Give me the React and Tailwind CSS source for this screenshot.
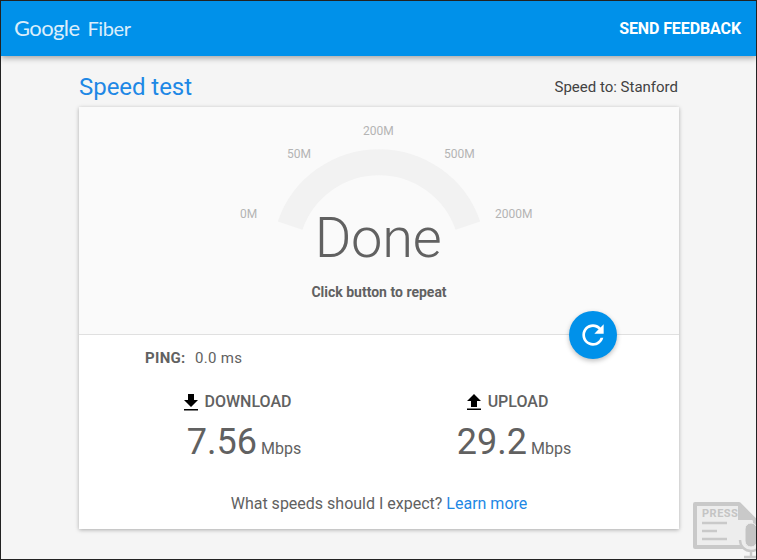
export default function App() {
  const roboto = { fontFamily: "Roboto, sans-serif" };
  return (
    <div style={roboto} className="relative w-[757px] h-[560px] overflow-hidden border border-[#222] bg-[#f5f5f5] text-[#616161]">
      <header className="relative z-10 h-[55px] bg-[#0091ea] shadow-[0_2px_6px_rgba(0,0,0,0.35)] flex items-center justify-between pl-[13px] pr-[15px] text-white">
        <div className="flex items-baseline gap-[8px] text-[22px] leading-none tracking-[-0.6px] opacity-85 font-['Lato',sans-serif] pb-[2px]">
          <span>Google</span>
          <span className="text-[20px] tracking-[-0.4px]">Fiber</span>
        </div>
        <span className="text-[16px] font-bold tracking-[-0.1px]">SEND FEEDBACK</span>
      </header>

      <main className="w-[600px] ml-[78px]">
        <div className="h-[51px] flex items-center justify-between">
          <h1 className="text-[24px] text-[#1e88e5] pt-[11px] tracking-[-0.05px]">Speed test</h1>
          <span className="text-[15px] text-[#424242] pt-[11px] pr-[1px]">Speed to: Stanford</span>
        </div>

        <section className="relative bg-white shadow-[0_1px_4px_rgba(0,0,0,0.3)] h-[422px]">
          <div className="relative h-[228px] bg-[#fafafa] border-b border-[#e0e0e0]">
            <svg className="absolute left-[190px] top-[39px]" width="220" height="100" viewBox="0 0 220 100">
              <path d="M 21.1 79.6 A 94 94 0 0 1 198.9 79.6" fill="none" stroke="#f2f2f2" strokeWidth="26" />
            </svg>
            <span className="absolute left-[161px] top-[98px] text-[12px] text-[#b4b4b4]">0M</span>
            <span className="absolute left-[208px] top-[38px] text-[12px] text-[#b4b4b4]">50M</span>
            <span className="absolute left-[284px] top-[15px] text-[12px] text-[#b4b4b4]">200M</span>
            <span className="absolute left-[365px] top-[38px] text-[12px] text-[#b4b4b4]">500M</span>
            <span className="absolute left-[416px] top-[98px] text-[12px] text-[#b4b4b4]">2000M</span>
            <div className="absolute inset-x-0 -left-[2px] top-[96px] text-center text-[56px] leading-[70px] font-light tracking-[-0.3px]">Done</div>
            <div className="absolute inset-x-0 top-[177px] text-center text-[14px] leading-[17px] font-bold">Click button to repeat</div>
            <button className="absolute left-[490px] top-[204px] w-[48px] h-[48px] rounded-full bg-[#0091ea] shadow-[0_2px_5px_rgba(0,0,0,0.26)] flex items-center justify-center">
              <svg width="32" height="32" viewBox="0 0 24 24" fill="#fff">
                <path d="M17.65 6.35C16.2 4.9 14.21 4 12 4c-4.42 0-7.99 3.58-7.99 8s3.57 8 7.99 8c3.73 0 6.84-2.55 7.73-6h-2.08c-.82 2.33-3.04 4-5.65 4-3.31 0-6-2.69-6-6s2.69-6 6-6c1.66 0 3.14.69 4.22 1.78L13 11h7V4l-2.35 2.35z" />
              </svg>
            </button>
          </div>

          <div className="flex items-baseline pl-[66px] pt-[14px] text-[15px] leading-[18px]">
            <span className="font-bold w-[50px] tracking-[0.3px]">PING:</span>
            <span className="tracking-[0.3px]">0.0 ms</span>
          </div>

          <div className="flex mt-[25px] text-[16px]">
            <div className="w-[300px] flex flex-col items-center">
              <div className="flex items-center gap-[6px] h-[20px] font-medium ml-[16px]">
                <svg width="16" height="18" viewBox="0 0 16 18" fill="#000"><path d="M5 1h6v6h4l-7 7-7-7h4zM1 16h14v1.6H1z" /></svg>
                <span>DOWNLOAD</span>
              </div>
              <div className="flex items-baseline gap-[4px] mt-[9px] ml-[30px]">
                <span className="text-[36px] leading-[42px]">7.56</span>
                <span>Mbps</span>
              </div>
            </div>
            <div className="w-[300px] flex flex-col items-center">
              <div className="flex items-center gap-[6px] h-[20px] font-medium -ml-[44px]">
                <svg width="16" height="18" viewBox="0 0 16 18" fill="#000"><path d="M5 14h6V8h4L8 1 1 8h4zM1 15.4h14V17H1z" /></svg>
                <span>UPLOAD</span>
              </div>
              <div className="flex items-baseline gap-[4px] mt-[9px] -ml-[30px]">
                <span className="text-[36px] leading-[42px]">29.2</span>
                <span>Mbps</span>
              </div>
            </div>
          </div>

          <p className="text-center text-[16px] leading-[20px] mt-[31px]">
            What speeds should I expect? <a className="text-[#1e88e5]">Learn more</a>
          </p>
        </section>
      </main>

      <svg className="absolute left-[692px] top-[499px] z-20" width="64" height="60" viewBox="0 0 64 60">
        <path d="M2 4h44l16 16v27H2z" fill="#ededed" stroke="#c9c9c9" strokeWidth="4" strokeLinejoin="round" />
        <path d="M45 4v16h17z" fill="#c9c9c9" />
        <text x="9" y="17" fontSize="11" fontWeight="700" letterSpacing="0.5" fill="#c4c4c4" fontFamily="Roboto, sans-serif">PRESS</text>
        <path d="M9 23h25M9 31h15M9 39h25" stroke="#c9c9c9" strokeWidth="2.4" />
        <path d="M46 40a11 11 0 0 0 22 0" fill="#ededed" />
        <rect x="52" y="23" width="12" height="24" rx="6" fill="#c4c4c4" stroke="#ededed" strokeWidth="1" />
        <path d="M47 40a11 11 0 0 0 22 0M58 51v6M51 57h14" fill="none" stroke="#c9c9c9" strokeWidth="2.4" />
      </svg>
    </div>
  );
}
